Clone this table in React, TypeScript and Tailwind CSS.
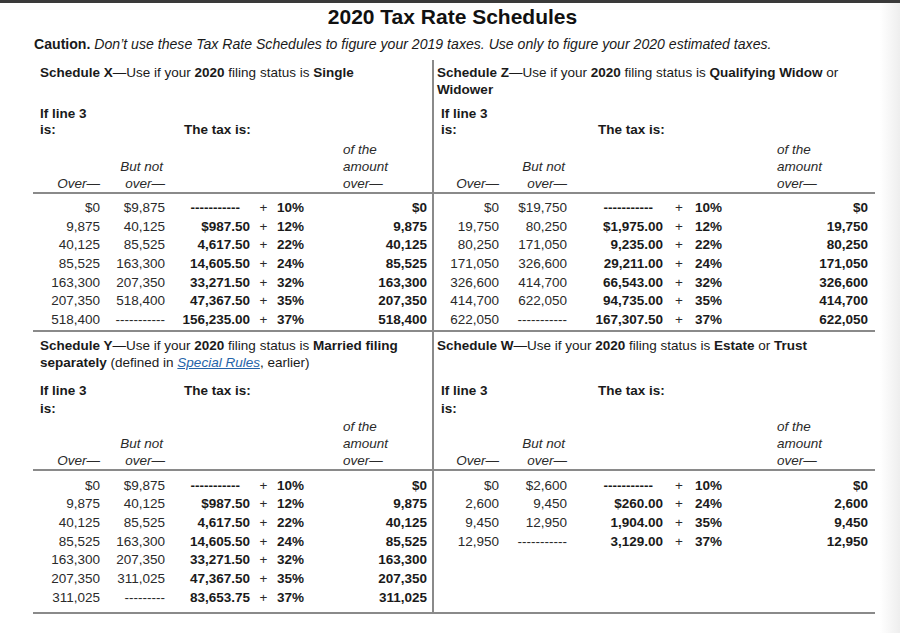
import React from "react";

type Row = [string, string, string, string, string];

const X: Row[] = [
  ["$0", "$9,875", "-----------", "10%", "$0"],
  ["9,875", "40,125", "$987.50", "12%", "9,875"],
  ["40,125", "85,525", "4,617.50", "22%", "40,125"],
  ["85,525", "163,300", "14,605.50", "24%", "85,525"],
  ["163,300", "207,350", "33,271.50", "32%", "163,300"],
  ["207,350", "518,400", "47,367.50", "35%", "207,350"],
  ["518,400", "-----------", "156,235.00", "37%", "518,400"],
];
const Z: Row[] = [
  ["$0", "$19,750", "-----------", "10%", "$0"],
  ["19,750", "80,250", "$1,975.00", "12%", "19,750"],
  ["80,250", "171,050", "9,235.00", "22%", "80,250"],
  ["171,050", "326,600", "29,211.00", "24%", "171,050"],
  ["326,600", "414,700", "66,543.00", "32%", "326,600"],
  ["414,700", "622,050", "94,735.00", "35%", "414,700"],
  ["622,050", "-----------", "167,307.50", "37%", "622,050"],
];
const Y: Row[] = [
  ["$0", "$9,875", "-----------", "10%", "$0"],
  ["9,875", "40,125", "$987.50", "12%", "9,875"],
  ["40,125", "85,525", "4,617.50", "22%", "40,125"],
  ["85,525", "163,300", "14,605.50", "24%", "85,525"],
  ["163,300", "207,350", "33,271.50", "32%", "163,300"],
  ["207,350", "311,025", "47,367.50", "35%", "207,350"],
  ["311,025", "---------", "83,653.75", "37%", "311,025"],
];
const W: Row[] = [
  ["$0", "$2,600", "-----------", "10%", "$0"],
  ["2,600", "9,450", "$260.00", "24%", "2,600"],
  ["9,450", "12,950", "1,904.00", "35%", "9,450"],
  ["12,950", "-----------", "3,129.00", "37%", "12,950"],
];

const LEFT = "grid grid-cols-[67px_65px_85px_27px_60px_90px]";
const RIGHT = "grid grid-cols-[65px_68px_96px_32px_60px_113px]";

function DataRows({ rows, cols }: { rows: Row[]; cols: string }) {
  return (
    <div className="flex flex-col">
      {rows.map((r, i) => (
        <div key={i} className={`${cols} h-[18.67px] items-center text-[13.5px] leading-[18.67px]`}>
          <div className="text-right text-[#2a2a2a]">{r[0]}</div>
          <div className="text-right text-[#2a2a2a]">{r[1]}</div>
          <div className={`text-right font-bold text-[#1a1a1a] ${r[2].startsWith("-") ? "pr-[10px]" : ""}`}>{r[2]}</div>
          <div className="text-center text-[#2a2a2a]">+</div>
          <div className="font-bold text-[#1a1a1a]">{r[3]}</div>
          <div className="text-right font-bold text-[#1a1a1a]">{r[4]}</div>
        </div>
      ))}
    </div>
  );
}

function ColHeads({ cols, lastPad }: { cols: string; lastPad: string }) {
  return (
    <div className={`${cols} h-[51px] text-[13.5px] italic leading-[17px] text-[#2a2a2a]`}>
      <div className="flex flex-col justify-end text-right">Over—</div>
      <div className="flex flex-col justify-end text-right">
        <span className="pr-[2px]">But not</span>
        <span>over—</span>
      </div>
      <div />
      <div />
      <div />
      <div className={`flex flex-col justify-end ${lastPad}`}>
        <span>of the</span>
        <span>amount</span>
        <span>over—</span>
      </div>
    </div>
  );
}

function IfLine({ gap, taxAlign, lh }: { gap: string; taxAlign: string; lh: string }) {
  return (
    <div className={`flex pl-[7px] text-[13.5px] font-bold text-[#1a1a1a] ${lh}`}>
      <div className={`flex flex-col ${gap}`}>
        <span>If line 3</span>
        <span>is:</span>
      </div>
      <div className={`flex flex-col ${taxAlign}`}>
        <span>The tax is:</span>
      </div>
    </div>
  );
}

export default function App() {
  return (
    <div className="flex h-[633px] w-[900px] flex-col overflow-hidden bg-white font-['Liberation_Sans',Arial,sans-serif]">
      <div className="h-[3px] w-full bg-[#3a3a3a]" />
      <div className="flex flex-1">
        <div className="w-[880px]">
          <div className="mt-[1px] w-[872px] pl-[33px] text-center text-[21px] font-bold leading-[25px] text-[#111]">
            2020 Tax Rate Schedules
          </div>
          <div className="mt-[6px] pl-[34px] text-[14.1px] leading-[18px] text-[#1a1a1a]">
            <span className="font-bold">Caution.</span>{" "}
            <span className="italic">
              Don’t use these Tax Rate Schedules to figure your 2019 taxes. Use only to figure your 2020 estimated taxes.
            </span>
          </div>
          <div className="ml-[33px] mt-[7px] grid w-[842px] grid-cols-[401px_441px]">
            {/* Section A left */}
            <div className="border-b-2 border-r-2 border-[#8a8a8a] pt-[4px]">
              <div className="h-[34px] whitespace-nowrap pl-[7px] text-[13.5px] leading-[17px] text-[#1a1a1a]">
                <span className="font-bold">Schedule X</span>—Use if your <span className="font-bold">2020</span> filing
                status is <span className="font-bold">Single</span>
              </div>
              <div className="mt-[8px]">
                <IfLine gap="w-[144px]" taxAlign="justify-end" lh="leading-[16px]" />
              </div>
              <div className="mt-[3px]">
                <ColHeads cols={LEFT} lastPad="pl-[6px]" />
              </div>
            </div>
            {/* Section A right */}
            <div className="border-b-2 border-[#8a8a8a] pt-[4px]">
              <div className="h-[34px] whitespace-nowrap pl-[3px] text-[13.5px] leading-[17px] text-[#1a1a1a]">
                <span className="font-bold">Schedule Z</span>—Use if your <span className="font-bold">2020</span> filing
                status is <span className="font-bold">Qualifying Widow</span> or
                <br />
                <span className="font-bold">Widower</span>
              </div>
              <div className="mt-[8px]">
                <IfLine gap="w-[157px]" taxAlign="justify-end" lh="leading-[16px]" />
              </div>
              <div className="mt-[3px]">
                <ColHeads cols={RIGHT} lastPad="pl-[22px]" />
              </div>
            </div>
            {/* Section B */}
            <div className="border-b-2 border-r-2 border-[#8a8a8a] pt-[5px]">
              <DataRows rows={X} cols={LEFT} />
            </div>
            <div className="border-b-2 border-[#8a8a8a] pt-[5px]">
              <DataRows rows={Z} cols={RIGHT} />
            </div>
            {/* Section C */}
            <div className="border-b-2 border-r-2 border-[#8a8a8a] pt-[5px]">
              <div className="h-[34px] whitespace-nowrap pl-[7px] text-[13.5px] leading-[17px] text-[#1a1a1a]">
                <span className="font-bold">Schedule Y</span>—Use if your <span className="font-bold">2020</span> filing
                status is <span className="font-bold">Married filing</span>
                <br />
                <span className="font-bold">separately</span> (defined in{" "}
                <span className="italic text-[#2563a8] underline">Special Rules</span>, earlier)
              </div>
              <div className="mt-[11px]">
                <IfLine gap="w-[144px]" taxAlign="justify-start" lh="leading-[18px]" />
              </div>
              <ColHeads cols={LEFT} lastPad="pl-[6px]" />
            </div>
            <div className="border-b-2 border-[#8a8a8a] pt-[5px]">
              <div className="h-[34px] whitespace-nowrap pl-[3px] text-[13.5px] leading-[17px] text-[#1a1a1a]">
                <span className="font-bold">Schedule W</span>—Use if your <span className="font-bold">2020</span> filing
                status is <span className="font-bold">Estate</span> or <span className="font-bold">Trust</span>
              </div>
              <div className="mt-[11px]">
                <IfLine gap="w-[157px]" taxAlign="justify-start" lh="leading-[18px]" />
              </div>
              <ColHeads cols={RIGHT} lastPad="pl-[22px]" />
            </div>
            {/* Section D */}
            <div className="border-b-2 border-r-2 border-[#8a8a8a] pb-[5px] pt-[6px]">
              <DataRows rows={Y} cols={LEFT} />
            </div>
            <div className="border-b-2 border-[#8a8a8a] pb-[5px] pt-[6px]">
              <DataRows rows={W} cols={RIGHT} />
            </div>
          </div>
        </div>
        <div className="w-[20px] bg-gradient-to-r from-white to-[#eeeeee]" />
      </div>
    </div>
  );
}
